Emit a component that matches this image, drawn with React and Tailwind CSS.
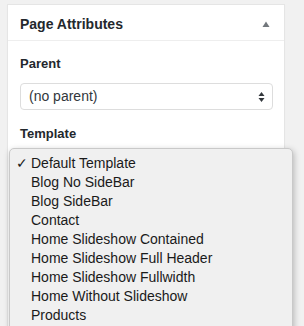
import React from 'react';

const templates = [
  'Default Template',
  'Blog No SideBar',
  'Blog SideBar',
  'Contact',
  'Home Slideshow Contained',
  'Home Slideshow Full Header',
  'Home Slideshow Fullwidth',
  'Home Without Slideshow',
  'Products',
];

const App = () => {
  return (
    <div className="h-[326px] overflow-hidden bg-[#f1f1f1] pt-[4px] pl-[7px] font-['Liberation_Sans',Arial,sans-serif] text-[#23282d] relative">
      {/* Panel */}
      <div className="w-[278px] h-[340px] bg-white border border-[#e5e5e5] shadow-[0_1px_1px_rgba(0,0,0,0.04)]">
        <div className="h-[36px] flex items-center justify-between px-[12px] pt-[3px] border-b border-[#eeeeee]">
          <h2 className="text-[14px] font-bold">Page Attributes</h2>
          <svg width="10" height="8" viewBox="0 0 10 8" className="mr-[1px]">
            <path d="M5 1.5 L8.5 7 L1.5 7 Z" fill="#72777c" />
          </svg>
        </div>

        <div className="px-[12px] pt-[14px]">
          <label className="block text-[13px] font-bold leading-[18px]">Parent</label>
          <div className="mt-[10px] h-[27px] w-[253px] rounded-[4px] border border-[#dddddd] flex items-center justify-between pl-[8px] pr-[7px] text-[14px] text-[#32373c]">
            <span>(no parent)</span>
            <svg width="7" height="12" viewBox="0 0 7 12">
              <path d="M3.5 1 L6.5 5 L0.5 5 Z" fill="#32373c" />
              <path d="M3.5 11 L6.5 7 L0.5 7 Z" fill="#32373c" />
            </svg>
          </div>

          <label className="block mt-[15px] text-[13px] font-bold leading-[18px]">Template</label>
          <div className="mt-[7px] h-[27px] w-[253px] rounded-[4px] border border-[#5b9dd9]" />
        </div>
      </div>

      {/* Open dropdown menu */}
      <div className="absolute left-[9px] top-[148px] w-[284px] h-[200px] bg-[#f0f0f0] border border-[#c9c9c9] rounded-[5px] shadow-[1px_2px_6px_rgba(0,0,0,0.25)] pt-[5px]">
        <ul className="text-[14px] text-[#1a1a1a]">
          {templates.map((t, i) => (
            <li key={t} className="h-[19px] flex items-center">
              <span className="w-[21px] pl-[6px] text-[14px]">{i === 0 ? '✓' : ''}</span>
              <span>{t}</span>
            </li>
          ))}
        </ul>
      </div>
    </div>
  );
};

export default App;
